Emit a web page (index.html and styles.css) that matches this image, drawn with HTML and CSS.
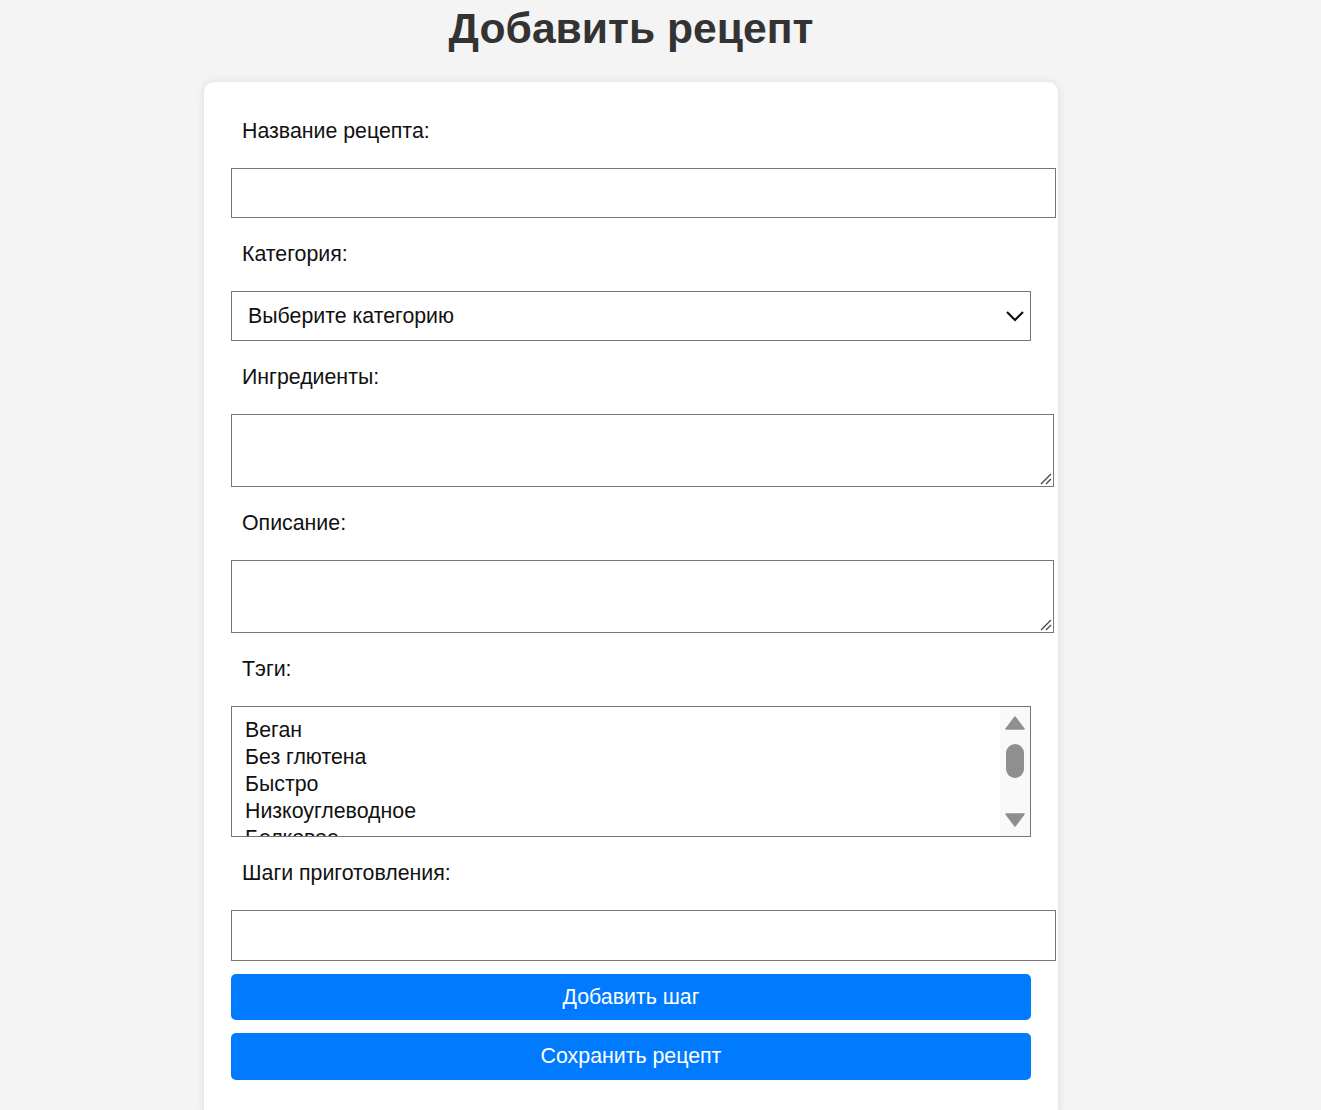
FILE: index.html
```html
<!DOCTYPE html>
<html lang="ru">
<head>
<meta charset="utf-8">
<title>Добавить рецепт</title>
<link rel="stylesheet" href="styles.css">
</head>
<body>
<div class="page">
<h1 class="page-title">Добавить рецепт</h1>
<form class="card">
  <label class="field-label" for="name">Название рецепта:</label>
  <input class="text-input" id="name" type="text">

  <label class="field-label" for="cat">Категория:</label>
  <div class="select-box" id="cat">
    <span>Выберите категорию</span>
    <svg class="chevron" width="20" height="12" viewBox="0 0 20 12"><path d="M2 2 L10 10 L18 2" fill="none" stroke="#111" stroke-width="2.2"/></svg>
  </div>

  <label class="field-label" for="ingr">Ингредиенты:</label>
  <div class="area-box" id="ingr">
    <svg class="grip" width="14" height="14" viewBox="0 0 14 14"><path d="M3 13 L13 3 M8 13 L13 8" stroke="#444" stroke-width="1.3" fill="none"/></svg>
  </div>

  <label class="field-label" for="desc">Описание:</label>
  <div class="area-box" id="desc">
    <svg class="grip" width="14" height="14" viewBox="0 0 14 14"><path d="M3 13 L13 3 M8 13 L13 8" stroke="#444" stroke-width="1.3" fill="none"/></svg>
  </div>

  <label class="field-label" for="tags">Тэги:</label>
  <div class="list-box" id="tags">
    <div class="list-options">
      <div class="opt">Веган</div>
      <div class="opt">Без глютена</div>
      <div class="opt">Быстро</div>
      <div class="opt">Низкоуглеводное</div>
      <div class="opt">Белковое</div>
    </div>
    <div class="scrollbar">
      <svg width="20" height="14" viewBox="0 0 20 14"><path d="M10 1 L19 13 L1 13 Z" fill="#8f8f8f" stroke="#8f8f8f" stroke-width="1.5" stroke-linejoin="round"/></svg>
      <div class="thumb"></div>
      <div class="sb-spacer"></div>
      <svg width="20" height="14" viewBox="0 0 20 14"><path d="M1 1 L19 1 L10 13 Z" fill="#8f8f8f" stroke="#8f8f8f" stroke-width="1.5" stroke-linejoin="round"/></svg>
    </div>
  </div>

  <label class="field-label" for="step">Шаги приготовления:</label>
  <input class="text-input step-input" id="step" type="text">

  <button type="button" class="btn first-btn">Добавить шаг</button>
  <button type="button" class="btn">Сохранить рецепт</button>
</form>
</div>
</body>
</html>
```

FILE: styles.css
```css
html, body {
  margin: 0;
  padding: 0;
}
body {
  background: #f4f4f4;
  font-family: "Liberation Sans", Arial, sans-serif;
  color: #111;
  overflow: hidden;
}
.page {
  width: 854px;
  margin-left: 204px;
}
.page-title {
  margin: 0;
  padding-top: 4px;
  height: 82px;
  box-sizing: border-box;
  text-align: center;
  font-size: 42.67px;
  line-height: 49px;
  font-weight: bold;
  color: #333;
}
.card {
  width: 800px;
  padding: 27px 27px 40px;
  background: #fff;
  border-radius: 10px;
  box-shadow: 0 0 10px rgba(0, 0, 0, 0.1);
  display: flex;
  flex-direction: column;
  align-items: flex-start;
}
.field-label {
  display: block;
  padding: 10px 11px;
  font-size: 21.33px;
  line-height: 24px;
  margin: 14px 0 15px;
  color: #111;
  white-space: nowrap;
}
.field-label:first-child {
  margin-top: 0;
}
.text-input {
  box-sizing: border-box;
  width: 825px;
  height: 50px;
  border: 1px solid #767676;
  border-radius: 0;
  padding: 0 12px;
  font: 21.33px "Liberation Sans", Arial, sans-serif;
  background: #fff;
  margin: 0;
}
.step-input {
  height: 51px;
}
.select-box {
  box-sizing: border-box;
  width: 800px;
  height: 50px;
  border: 1px solid #767676;
  display: flex;
  align-items: center;
  justify-content: space-between;
  padding: 0 5px 0 16px;
  font-size: 21.33px;
  color: #111;
}
.area-box {
  box-sizing: border-box;
  width: 823px;
  height: 73px;
  border: 1px solid #767676;
  display: flex;
  align-items: flex-end;
  justify-content: flex-end;
  padding: 0 1px 1px 0;
}
.list-box {
  box-sizing: border-box;
  width: 800px;
  height: 131px;
  border: 1px solid #767676;
  display: flex;
  overflow: hidden;
}
.list-options {
  flex: 1;
  padding: 10px 14px 0 13px;
  font-size: 21.33px;
  line-height: 27px;
  color: #111;
  overflow: hidden;
}
.scrollbar {
  width: 30px;
  background: #f9f9f9;
  display: flex;
  flex-direction: column;
  align-items: center;
  padding: 9px 0 9px;
  box-sizing: border-box;
}
.thumb {
  width: 18px;
  height: 34px;
  border-radius: 9px;
  background: #8f8f8f;
  margin-top: 14px;
}
.sb-spacer {
  flex: 1;
}
.btn {
  box-sizing: border-box;
  width: 800px;
  height: 46px;
  border: 0;
  border-radius: 5px;
  background: #007bff;
  color: #fff;
  font: 21.33px "Liberation Sans", Arial, sans-serif;
  padding: 0;
  margin-top: 13px;
}
.btn + .btn {
  height: 47px;
}
```
